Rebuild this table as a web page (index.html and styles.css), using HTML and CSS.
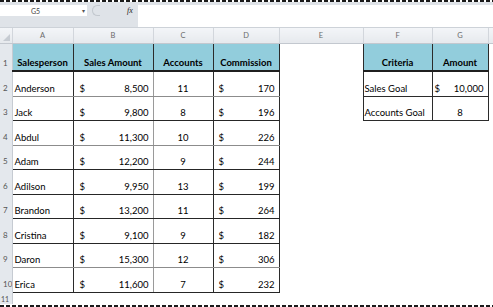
FILE: index.html
```html
<!DOCTYPE html>
<html lang="en">
<head>
    <meta charset="UTF-8">
    <title>Commission Sheet</title>
    <link rel="stylesheet" href="styles.css">
</head>
<body>
    <div class="dashes"></div>
    <div class="toolbar">
        <div class="left">
            <div class="namerow">
                <div class="namebox"><span class="ref">G5</span><span class="arrow">&#9662;</span></div>
                <span class="knob"></span>
                <span class="fx">fx</span>
            </div>
        </div>
        <div class="input"></div>
    </div>
    <div class="sep"></div>

    <table class="sheet">
        <colgroup>
            <col class="w-rh"><col class="w-a"><col class="w-b"><col class="w-c"><col class="w-d">
            <col class="w-e"><col class="w-f"><col class="w-g"><col class="w-h">
        </colgroup>
        <tr class="colhead">
            <th class="corner"><span class="tri"></span></th>
            <th>A</th><th>B</th><th>C</th><th>D</th><th>E</th><th>F</th><th>G</th><th></th>
        </tr>
        <tr class="r1">
            <th class="rh">1</th>
            <td class="hd">Salesperson</td>
            <td class="hd">Sales Amount</td>
            <td class="hd">Accounts</td>
            <td class="hd">Commission</td>
            <td></td>
            <td class="hd">Criteria</td>
            <td class="hd">Amount</td>
            <td></td>
        </tr>
        <tr class="ra lt">
            <th class="rh">2</th>
            <td class="name">Anderson</td>
            <td class="bx"><div class="money"><span>$</span><span>8,500</span></div></td>
            <td class="cnt">11</td>
            <td class="dx"><div class="money"><span>$</span><span>170</span></div></td>
            <td></td>
            <td class="crit">Sales Goal</td>
            <td class="gx"><div class="money"><span>$</span><span>10,000</span></div></td>
            <td></td>
        </tr>
        <tr class="rb dk">
            <th class="rh">3</th>
            <td class="name">Jack</td>
            <td class="bx"><div class="money"><span>$</span><span>9,800</span></div></td>
            <td class="cnt">8</td>
            <td class="dx"><div class="money"><span>$</span><span>196</span></div></td>
            <td></td>
            <td class="crit">Accounts Goal</td>
            <td class="gx ctr">8</td>
            <td></td>
        </tr>
        <tr class="ra lt">
            <th class="rh">4</th>
            <td class="name">Abdul</td>
            <td class="bx"><div class="money"><span>$</span><span>11,300</span></div></td>
            <td class="cnt">10</td>
            <td class="dx"><div class="money"><span>$</span><span>226</span></div></td>
            <td></td><td></td><td></td><td></td>
        </tr>
        <tr class="rb dk">
            <th class="rh">5</th>
            <td class="name">Adam</td>
            <td class="bx"><div class="money"><span>$</span><span>12,200</span></div></td>
            <td class="cnt">9</td>
            <td class="dx"><div class="money"><span>$</span><span>244</span></div></td>
            <td></td><td></td><td></td><td></td>
        </tr>
        <tr class="ra dk">
            <th class="rh">6</th>
            <td class="name">Adilson</td>
            <td class="bx"><div class="money"><span>$</span><span>9,950</span></div></td>
            <td class="cnt">13</td>
            <td class="dx"><div class="money"><span>$</span><span>199</span></div></td>
            <td></td><td></td><td></td><td></td>
        </tr>
        <tr class="rb dk">
            <th class="rh">7</th>
            <td class="name">Brandon</td>
            <td class="bx"><div class="money"><span>$</span><span>13,200</span></div></td>
            <td class="cnt">11</td>
            <td class="dx"><div class="money"><span>$</span><span>264</span></div></td>
            <td></td><td></td><td></td><td></td>
        </tr>
        <tr class="ra dk">
            <th class="rh">8</th>
            <td class="name">Cristina</td>
            <td class="bx"><div class="money"><span>$</span><span>9,100</span></div></td>
            <td class="cnt">9</td>
            <td class="dx"><div class="money"><span>$</span><span>182</span></div></td>
            <td></td><td></td><td></td><td></td>
        </tr>
        <tr class="rb lt">
            <th class="rh">9</th>
            <td class="name">Daron</td>
            <td class="bx"><div class="money"><span>$</span><span>15,300</span></div></td>
            <td class="cnt">12</td>
            <td class="dx"><div class="money"><span>$</span><span>306</span></div></td>
            <td></td><td></td><td></td><td></td>
        </tr>
        <tr class="ra dk">
            <th class="rh">10</th>
            <td class="name">Erica</td>
            <td class="bx"><div class="money"><span>$</span><span>11,600</span></div></td>
            <td class="cnt">7</td>
            <td class="dx"><div class="money"><span>$</span><span>232</span></div></td>
            <td></td><td></td><td></td><td></td>
        </tr>
        <tr class="r11">
            <th class="rh">11</th>
            <td></td><td></td><td></td><td></td><td></td><td></td><td></td><td></td>
        </tr>
    </table>
    <div class="dashes bottom"></div>
</body>
</html>
```

FILE: styles.css
```css
body { margin: 0; background: #fff; font-family: Lato, "Liberation Sans", sans-serif; color: #000; overflow: hidden; }

.dashes { height: 2px; background: repeating-linear-gradient(90deg, #1a1a1a 0 4px, transparent 4px 6px); }
.dashes.bottom { margin-top: 1px; }

.toolbar { display: flex; height: 22px; padding-top: 3px; background: #dfe3e8; }
.left { width: 138px; }
.namerow { display: flex; align-items: center; height: 11px; }
.namebox { width: 87px; height: 11px; background: #fff; display: flex; align-items: center; font-size: 7px; color: #444; }
.ref { margin-left: 31px; }
.arrow { margin-left: 42px; font-size: 6px; color: #555; }
.knob { width: 7px; height: 9px; margin-left: 5px; border: 1px solid #c3c8ce; border-right: none; border-radius: 6px 0 0 6px; }
.fx { margin-left: 27px; font: italic 8px "Liberation Serif", serif; color: #222; }
.input { flex: 1; background: #fff; }
.sep { height: 1px; background: #cdd2d8; }

.sheet { border-collapse: collapse; table-layout: fixed; width: 493px; }
.w-rh { width: 12px; }
.w-a { width: 61px; }
.w-b { width: 80px; }
.w-c { width: 60px; }
.w-d { width: 66px; }
.w-e { width: 84px; }
.w-f { width: 69px; }
.w-g { width: 56px; }
.w-h { width: 5px; }

.sheet td, .sheet th { padding: 0 0 2px 0; font-size: 9.5px; line-height: 11px; vertical-align: bottom; white-space: nowrap; overflow: hidden; }

.colhead { height: 15px; }
.colhead th { padding: 1px 0 0; background: linear-gradient(#f3f5f8, #e6e9ed); border-right: 1px solid #d2d6dc; border-bottom: 1px solid #c3c8cf; font-size: 7.5px; font-weight: normal; color: #6a6a6a; vertical-align: middle; }
.corner { position: relative; }
.tri { position: absolute; right: 2px; bottom: 2px; border-style: solid; border-width: 0 0 7px 7px; border-color: transparent transparent #c6cbd2 transparent; }

.sheet .rh { background: #e4e8ed; border-right: 1px solid #c6cbd2; font-size: 8px; font-weight: normal; color: #555; text-align: left; padding-left: 3px; }
.sheet .r11 .rh { padding: 0 0 0 1px; font-size: 7px; line-height: 9px; }

.r1 { height: 28px; }
.ra { height: 25px; }
.rb { height: 24px; }
.r11 { height: 12px; }

.r1 .hd { background: #92cddc; font-weight: bold; text-align: center; border: 1px solid #2b2b2b; border-bottom: 2px solid #1f1f1f; }
.lt td:nth-child(-n+5) { border-bottom: 1px solid #8c8c8c; }
.dk td:nth-child(-n+5) { border-bottom: 1px solid #262626; }

.sheet .name { padding-left: 2px; border-right: 1px solid #2b2b2b; }
.bx { border-right: 1px solid #9a9a9a; }
.cnt { text-align: center; border-right: 1px solid #2b2b2b; }
.dx { border-right: 1px solid #2b2b2b; }
.money { display: flex; justify-content: space-between; }
.bx .money { padding: 0 4px 0 6px; }
.dx .money { padding: 0 4px 0 5px; }
.gx .money { padding: 0 4px 0 2px; }

.crit, .gx { border: 1px solid #2b2b2b; }
.sheet .crit { padding-left: 1px; }
.ctr { text-align: center; }
```
